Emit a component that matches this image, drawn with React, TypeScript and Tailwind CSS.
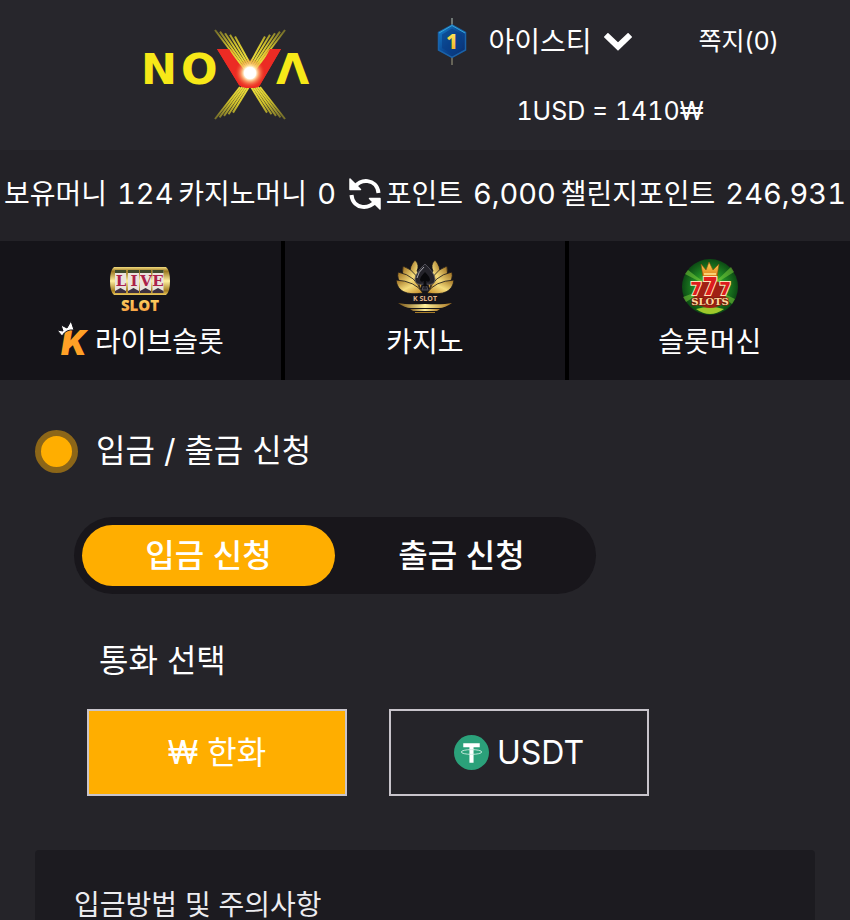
import { useState } from "react";

const rays = [0, 1, 2, 3, 4];

function NovaLogo() {
  return (
    <svg width="170" height="92" viewBox="0 0 170 92" role="img" aria-label="NOVA" className="overflow-visible">
      <defs>
        <radialGradient id="core">
          <stop offset="0" stopColor="#ffffff" />
          <stop offset="0.4" stopColor="#fffbe6" />
          <stop offset="0.55" stopColor="#ffd08a" stopOpacity="0.8" />
          <stop offset="1" stopColor="#f04a20" stopOpacity="0" />
        </radialGradient>
        <radialGradient id="beam" gradientUnits="userSpaceOnUse" cx="107" cy="45" r="54">
          <stop offset="0" stopColor="#fff04a" />
          <stop offset="0.6" stopColor="#d3c52c" />
          <stop offset="1" stopColor="#77702a" />
        </radialGradient>
      </defs>
      <g fill="#f7e818" fontFamily="DejaVu Sans" fontWeight="700" fontSize="43">
        <text x="-1" y="55">N</text>
        <text x="39" y="55">O</text>
        <text x="134" y="55">Λ</text>
      </g>
      <path
        d="M75 20 H87 Q90 20 91 22 L104 45 H111 L123 22 Q124 20 127 20 H139 L118 56 Q116 59 112 59 H104 Q100 59 97 56 Z"
        fill="#ec2b24"
      />
      <g stroke="url(#beam)" strokeWidth="2">
        {rays.map((i) => (
          <g key={i}>
            <path d={`M${73 + i * 5} ${1 + i * 1.6} L${104 + i * 2} 42`} />
            <path d={`M${143 - i * 5} ${1 + i * 1.6} L${112 - i * 2} 42`} />
            <path d={`M${73 + i * 4.5} ${90 - i * 1.6} L${98 + i * 2.2} 58`} />
            <path d={`M${143 - i * 4.5} ${90 - i * 1.6} L${118 - i * 2.2} 58`} />
          </g>
        ))}
      </g>
      <path d="M75 20 H87 L99 41 L108 50 L117 41 L128 20 H139 L118 56 Q116 59 112 59 H104 Q100 59 97 56 Z" fill="#ec2b24" />
      <circle cx="108" cy="44" r="15" fill="url(#core)" />
      <circle cx="108" cy="44" r="6" fill="#fff" />
    </svg>
  );
}

function LevelBadge() {
  return (
    <svg width="30" height="48" viewBox="0 0 30 48" role="img" aria-label="레벨 1">
      <defs>
        <linearGradient id="hex" x1="0" y1="0" x2="1" y2="1">
          <stop offset="0" stopColor="#1683cf" />
          <stop offset="0.5" stopColor="#0b4893" />
          <stop offset="1" stopColor="#0a2a69" />
        </linearGradient>
        <linearGradient id="one" x1="0" y1="0" x2="0" y2="1">
          <stop offset="0" stopColor="#fff36a" />
          <stop offset="1" stopColor="#f0a818" />
        </linearGradient>
      </defs>
      <path d="M15 0 V8" stroke="#b8c8bd" />
      <path d="M15 39 V47" stroke="#a5a184" />
      <path d="M15 7 L28.500 14.500 V32 L15 39.500 L1.500 32 V14.500 Z" fill="url(#hex)" stroke="#1a62a9" strokeWidth="1.500" />
      <path d="M2 15 L15 7.500 L28 15" fill="none" stroke="#35a9d8" />
      <path d="M15 10.500 L25 16.500 V30 L15 36 L5 30 V16.500 Z" fill="#093c83" opacity="0.6" />
      <text x="15" y="31" textAnchor="middle" fill="url(#one)" fontFamily="Noto Sans" fontWeight="800" fontSize="21">1</text>
    </svg>
  );
}

function RefreshIcon() {
  return (
    <svg width="32" height="32" viewBox="0 0 32 32" aria-hidden="true">
      <g fill="none" stroke="#fff" strokeWidth="4">
        <path d="M5 10 C10 0 28 0 29.500 15" />
        <path d="M27 22 C22 32 4 32 2.500 17" />
      </g>
      <path d="M1 1 V11.500 H11.500 Z" fill="#fff" stroke="#fff" strokeWidth="1.500" strokeLinejoin="round" />
      <path d="M31 31 V20.500 H20.500 Z" fill="#fff" stroke="#fff" strokeWidth="1.500" strokeLinejoin="round" />
    </svg>
  );
}

function LiveSlotArt() {
  return (
    <svg width="62" height="48" viewBox="0 0 62 48" aria-hidden="true">
      <defs>
        <linearGradient id="drum" x1="0" y1="0" x2="0" y2="1">
          <stop offset="0" stopColor="#f4dd80" />
          <stop offset="0.15" stopColor="#9a7620" />
          <stop offset="0.5" stopColor="#fff0a0" />
          <stop offset="0.85" stopColor="#a57e20" />
          <stop offset="1" stopColor="#ecc95e" />
        </linearGradient>
        <linearGradient id="slotText" x1="0" y1="0" x2="0" y2="1">
          <stop offset="0" stopColor="#ffe06a" />
          <stop offset="1" stopColor="#f5963c" />
        </linearGradient>
      </defs>
      <path d="M5 1 H57 Q61 4 61 15 T57 29 H5 Q1 26 1 15 T5 1 Z" fill="url(#drum)" />
      {[6, 19, 31, 43.5].map((x) => (
        <g key={x}>
          <rect x={x} y="4" width="11" height="23" rx="1" fill="#e9e3dc" />
          <path d={`M${x} 4 h11 v3 h-11 Z`} fill="#3f4a2c" />
          <path d={`M${x} 27 h11 v-2 l-5.500 -3 l-5.500 3 Z`} fill="#3d3040" />
        </g>
      ))}
      <g fill="#ac2148" fontFamily="DejaVu Serif" fontWeight="700" fontSize="15" textAnchor="middle">
        <text x="12" y="20">L</text>
        <text x="25" y="20">I</text>
        <text x="37" y="20">V</text>
        <text x="49" y="20">E</text>
      </g>
      <text x="31" y="45" textAnchor="middle" fill="url(#slotText)" fontFamily="Open Sans" fontWeight="800" fontSize="15">SLOT</text>
    </svg>
  );
}

function CrownK() {
  return (
    <svg width="34" height="42" viewBox="0 0 34 42" aria-hidden="true" className="overflow-visible">
      <text x="4" y="34" fill="#ffa126" fontFamily="Inter" fontStyle="italic" fontWeight="900" fontSize="34">K</text>
      <path d="M0 9 L6 10 L4 4 L10 7 L14 0 L17 9 Q9 8 5 15 Z" fill="#fff" stroke="#151419" strokeWidth="1" />
    </svg>
  );
}

function CasinoArt() {
  return (
    <svg width="60" height="56" viewBox="0 0 60 56" aria-hidden="true">
      <defs>
        <linearGradient id="petal" x1="0" y1="0" x2="1" y2="1">
          <stop offset="0" stopColor="#9a6b1c" />
          <stop offset="0.5" stopColor="#f5dc7c" />
          <stop offset="1" stopColor="#c08420" />
        </linearGradient>
        <linearGradient id="goldBar">
          <stop offset="0" stopColor="#7a5515" />
          <stop offset="0.5" stopColor="#fff09a" />
          <stop offset="1" stopColor="#a87420" />
        </linearGradient>
      </defs>
      <g id="leftPetals" fill="url(#petal)" stroke="#151419" strokeWidth="0.8">
        <path d="M20 1 Q8 14 25 31 Q30 22 22 12 Q25 6 20 1 Z" />
        <path d="M8 7 Q4 22 25 32 Q25 13 8 7 Z" />
        <path d="M3 13 Q0 28 26 33 Q22 17 3 13 Z" />
        <path d="M1 21 Q3 38 28 34 Q20 22 1 21 Z" />
      </g>
      <use href="#leftPetals" transform="matrix(-1 0 0 1 60 0)" />
      <path d="M30 5 Q21 13 20 20 Q20 27 29 25 L27 31 H33 L31 25 Q40 27 40 20 Q39 13 30 5 Z" fill="#24232a" stroke="#5b5963" strokeWidth="0.8" />
      <path d="M30 13 Q25 18 25 21 Q26 24 29 22 L28 27 H32 L31 22 Q34 24 35 21 Q35 18 30 13 Z" fill="#09090c" />
      <path d="M29 8 Q23 13 22 19" fill="none" stroke="#a9a8af" />
      <text x="30" y="42" textAnchor="middle" fill="#e2b58a" fontFamily="Open Sans" fontWeight="700" fontSize="7">K SLOT</text>
      <path d="M3 44 Q12 46 30 45 Q48 46 57 44 Q50 49 44 49 H16 Q10 49 3 44 Z" fill="url(#goldBar)" />
      <path d="M15 50 H45 L42 52 H18 Z" fill="url(#goldBar)" />
      <path d="M20 53.500 H40" stroke="#a77c27" />
    </svg>
  );
}

function SlotMachineArt() {
  return (
    <svg width="56" height="56" viewBox="0 0 56 56" aria-hidden="true">
      <defs>
        <radialGradient id="green">
          <stop offset="0" stopColor="#a8e83c" />
          <stop offset="0.55" stopColor="#218c24" />
          <stop offset="1" stopColor="#0c4a14" />
        </radialGradient>
        <linearGradient id="crown" x1="0" y1="0" x2="0" y2="1">
          <stop offset="0" stopColor="#ffd75a" />
          <stop offset="1" stopColor="#dc7a14" />
        </linearGradient>
      </defs>
      <circle cx="28" cy="28" r="28" fill="url(#green)" />
      <path d="M28 28 L3 15 L6 11 Z M28 28 L49 8 L52 13 Z M28 28 L1 38 L4 43 Z M28 28 L53 40 L50 45 Z" fill="#7fd43b" opacity="0.5" />
      <path d="M14 50 Q28 46 42 50 Q28 60 14 50 Z" fill="#9fc92b" />
      <ellipse cx="28" cy="35" rx="16" ry="14" fill="#a02014" />
      <path d="M19 5 L24 11 L27 3 L31 11 L37 5 L35 18 H21 Z" fill="url(#crown)" stroke="#8b4a0c" strokeWidth="0.6" />
      <path d="M22 15 H34" stroke="#ffe98f" strokeWidth="1.500" />
      <g fill="#dd1d1d" stroke="#ffe3b8" strokeWidth="2" paintOrder="stroke" fontFamily="Noto Sans" fontWeight="900" textAnchor="middle">
        <text x="14" y="36" fontSize="18">7</text>
        <text x="43" y="36" fontSize="18">7</text>
        <text x="28" y="36" fontSize="24">7</text>
      </g>
      <text x="28" y="46" textAnchor="middle" fill="#ffd9a0" stroke="#7c1e0b" strokeWidth="1.500" paintOrder="stroke" fontFamily="DejaVu Serif" fontWeight="700" fontSize="10">SLOTS</text>
    </svg>
  );
}

function TetherIcon() {
  return (
    <svg width="35" height="35" viewBox="0 0 34 34" aria-hidden="true">
      <circle cx="17" cy="17" r="17" fill="#2ba17a" />
      <path d="M9 8 H25 V12 H19 V27 H15 V12 H9 Z" fill="#fff" />
      <ellipse cx="17" cy="16.500" rx="10" ry="2.300" fill="none" stroke="#c9ebdf" strokeWidth="0.9" />
    </svg>
  );
}

function Balance({ label, value }: { label: string; value: string }) {
  return (
    <span className="flex items-center gap-2.5">
      {label}
      <span className="text-[29px] tabular-nums">{value}</span>
    </span>
  );
}

const navCell =
  "flex flex-col items-center bg-[#151419] pt-[18px] pb-[17px] text-[28px] leading-[42px]";
const tabBase = "h-[61px] w-[253px] rounded-full text-[32px] font-medium";
const currencyBase =
  "flex h-[87px] w-[260px] items-center justify-center gap-2 border-2 border-[#c8c4cb] text-[32px]";

export default function App() {
  const [tab, setTab] = useState("deposit");
  const [currency, setCurrency] = useState("krw");

  return (
    <div className="min-h-screen bg-[#252429] font-['Inter','Noto_Sans_CJK_KR',sans-serif] text-white">
      <header className="grid h-[150px] grid-cols-[37fr_48fr] bg-[#27262c]">
        <a href="#home" className="mt-[29px] justify-self-end pr-[58px]">
          <NovaLogo />
        </a>
        <div className="flex flex-col items-center pt-[18px]">
          <div className="flex items-center pr-1">
            <LevelBadge />
            <button className="ml-[21px] flex items-center gap-3 text-[28px]">
              아이스티
              <svg width="28" height="18" viewBox="0 0 28 18" aria-hidden="true">
                <path d="M4 4 L14 13.500 L24 4" fill="none" stroke="#fff" strokeWidth="6" strokeLinecap="square" />
              </svg>
            </button>
            <a href="#messages" className="ml-[67px] text-[25px]">쪽지(0)</a>
          </div>
          <p className="mt-[27px] text-[25px] leading-9 tabular-nums">1USD = 1410₩</p>
        </div>
      </header>

      <section className="flex h-[91px] items-center justify-between bg-[#232227] px-1 pb-1 text-[28px] whitespace-nowrap">
        <Balance label="보유머니" value="124" />
        <Balance label="카지노머니" value="0" />
        <button aria-label="새로고침" className="ml-2">
          <RefreshIcon />
        </button>
        <Balance label="포인트" value="6,000" />
        <Balance label="챌린지포인트" value="246,931" />
      </section>

      <nav className="grid grid-cols-3 gap-1 bg-black">
        <a href="#live" className={navCell}>
          <span className="flex h-[62px] items-center"><LiveSlotArt /></span>
          <span className="flex items-center gap-1"><CrownK />라이브슬롯</span>
        </a>
        <a href="#casino" className={navCell}>
          <span className="flex h-[62px] items-start"><CasinoArt /></span>
          카지노
        </a>
        <a href="#slots" className={navCell}>
          <span className="flex h-[62px] items-start"><SlotMachineArt /></span>
          슬롯머신
        </a>
      </nav>

      <main className="px-[35px] pt-12">
        <h1 className="flex items-center gap-[18px] text-[32px] leading-[46px]">
          <span className="size-[43px] rounded-full border-6 border-[#8c6618] bg-[#ffae00]" />
          입금 / 출금 신청
        </h1>

        <div className="mt-[43px] ml-[39px] flex w-fit rounded-full bg-[#18161b] p-2">
          <button
            onClick={() => setTab("deposit")}
            className={`${tabBase} ${tab === "deposit" ? "bg-[#ffae00]" : ""}`}
          >
            입금 신청
          </button>
          <button
            onClick={() => setTab("withdraw")}
            className={`${tabBase} ${tab === "withdraw" ? "bg-[#ffae00]" : ""}`}
          >
            출금 신청
          </button>
        </div>

        <h2 className="mt-11 ml-16 text-[32px] leading-[46px]">통화 선택</h2>
        <div className="mt-[25px] ml-[52px] flex gap-[42px]">
          <button
            onClick={() => setCurrency("krw")}
            className={`${currencyBase} ${currency === "krw" ? "bg-[#ffae00]" : ""}`}
          >
            ₩ 한화
          </button>
          <button
            onClick={() => setCurrency("usdt")}
            className={`${currencyBase} ${currency === "usdt" ? "bg-[#ffae00]" : ""}`}
          >
            <TetherIcon />
            USDT
          </button>
        </div>

        <section className="mt-[54px] rounded-t bg-[#1c1b20] pt-10 pl-[39px]">
          <h3 className="text-[28px] leading-[30px] text-[#ececf0]">입금방법 및 주의사항</h3>
        </section>
      </main>
    </div>
  );
}
